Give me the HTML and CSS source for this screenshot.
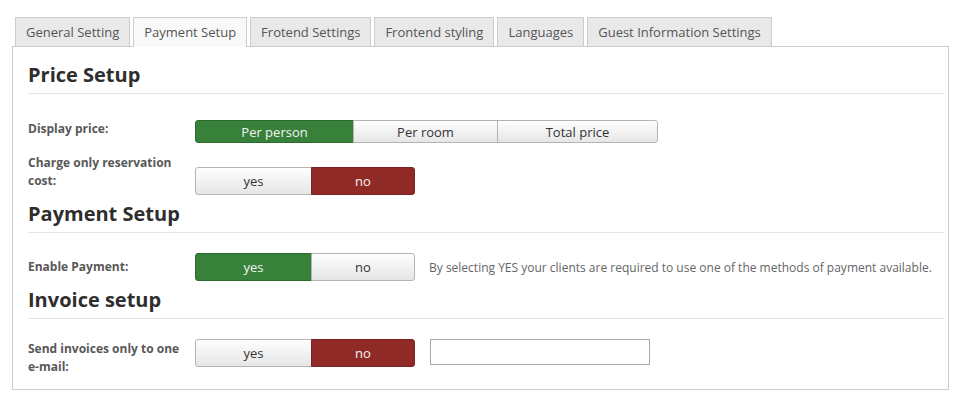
FILE: index.html
```html
<!DOCTYPE html>
<html>
<head>
<meta charset="utf-8">
<link rel="stylesheet" href="styles.css">
</head>
<body>
<div class="wrap">
  <div class="tabs">
    <div class="tab">General Setting</div>
    <div class="tab active">Payment Setup</div>
    <div class="tab">Frotend Settings</div>
    <div class="tab">Frontend styling</div>
    <div class="tab">Languages</div>
    <div class="tab">Guest Information Settings</div>
  </div>
  <div class="panel">
    <h2 class="heading first">Price Setup</h2>
    <hr class="rule">
    <div class="row row-price">
      <div class="label">Display price:</div>
      <div class="group short">
        <div class="btn green w-person">Per person</div>
        <div class="btn w-room">Per room</div>
        <div class="btn w-total">Total price</div>
      </div>
    </div>
    <div class="row row-charge">
      <div class="label">Charge only reservation cost:</div>
      <div class="group lower">
        <div class="btn w-yes">yes</div>
        <div class="btn red w-no">no</div>
      </div>
    </div>

    <h2 class="heading">Payment Setup</h2>
    <hr class="rule">
    <div class="row row-enable">
      <div class="label">Enable Payment:</div>
      <div class="group">
        <div class="btn green w-yes">yes</div>
        <div class="btn w-no">no</div>
      </div>
      <div class="desc">By selecting YES your clients are required to use one of the methods of payment available.</div>
    </div>

    <h2 class="heading">Invoice setup</h2>
    <hr class="rule">
    <div class="row row-invoice">
      <div class="label">Send invoices only to one e-mail:</div>
      <div class="group">
        <div class="btn w-yes">yes</div>
        <div class="btn red w-no">no</div>
      </div>
      <input class="email" type="text">
    </div>
  </div>
</div>
</body>
</html>
```

FILE: styles.css
```css
html, body {
  margin: 0;
  padding: 0;
  background: #ffffff;
}

body {
  font-family: "Open Sans", "Liberation Sans", sans-serif;
  color: #333333;
}

.wrap {
  padding: 17px 11px 0 12px;
}

.tabs {
  display: flex;
  gap: 3px;
  padding-left: 3px;
  position: relative;
  z-index: 1;
}

.tab {
  height: 28px;
  line-height: 28px;
  padding: 0 10px;
  font-size: 13px;
  color: #555555;
  background: #e9e9e9;
  border: 1px solid #cccccc;
  border-bottom: none;
}

.tab.active {
  background: #f9f9f9;
  height: 29px;
  margin-bottom: -1px;
}

.panel {
  border: 1px solid #cccccc;
  padding: 0 4px 13px 15px;
  background: #ffffff;
}

.heading {
  margin: 5px 0 0 0;
  font-size: 20px;
  line-height: 27px;
  font-weight: 700;
  color: #2e2e2e;
}

.heading.first {
  margin-top: 14px;
}

.rule {
  border: none;
  border-top: 1px solid #e4e4e4;
  margin: 5px 0 0 0;
  height: 0;
}

.row {
  display: flex;
  align-items: flex-start;
}

.row-price {
  margin-top: 26px;
}

.row-charge {
  margin-top: 11px;
}

.row-enable {
  margin-top: 20px;
  align-items: center;
}

.row-invoice {
  margin-top: 20px;
}

.label {
  width: 155px;
  margin-right: 12px;
  font-size: 12px;
  line-height: 18px;
  font-weight: 700;
  color: #585858;
}

.row-invoice .label {
  margin-top: 1px;
}

.group {
  display: flex;
  height: 28px;
}

.group.short {
  height: 23px;
}

.group.lower {
  margin-top: 13px;
}

.btn {
  box-sizing: border-box;
  display: flex;
  align-items: center;
  justify-content: center;
  font-size: 13px;
  color: #333333;
  border: 1px solid #b4b4b4;
  background: linear-gradient(#fefefe, #e6e6e6);
  margin-left: -1px;
}

.btn:first-child {
  margin-left: 0;
  border-radius: 3px 0 0 3px;
}

.btn:last-child {
  border-radius: 0 3px 3px 0;
}

.btn.green {
  background: #38813a;
  border-color: #2c6a2e;
  color: #f4f4f4;
}

.btn.red {
  background: #8f2a27;
  border-color: #7a2320;
  color: #f4f4f4;
}

.w-person { width: 159px; }
.w-room { width: 145px; }
.w-total { width: 161px; }
.w-yes { width: 117px; }
.w-no { width: 104px; }

.desc {
  margin-left: 14px;
  font-size: 12px;
  color: #666666;
}

.email {
  box-sizing: border-box;
  margin: 0 0 0 15px;
  width: 220px;
  height: 26px;
  border: 1px solid #aaaaaa;
  border-radius: 0;
  padding: 0 6px;
  font-family: inherit;
  background: #ffffff;
}
```
